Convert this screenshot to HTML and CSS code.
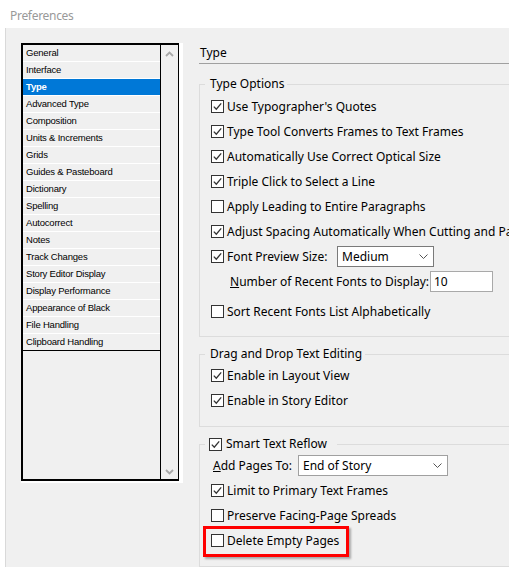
FILE: index.html
```html
<!DOCTYPE html>
<html>
<head>
<meta charset="utf-8">
<title>Preferences</title>
<link rel="stylesheet" href="styles.css">
</head>
<body>
<div class="titlebar">Preferences</div>
<div class="frame">
  <div class="sidebar">
    <div class="listbox">
      <ul class="list">
        <li>General</li>
        <li>Interface</li>
        <li class="sel">Type</li>
        <li>Advanced Type</li>
        <li>Composition</li>
        <li>Units &amp; Increments</li>
        <li>Grids</li>
        <li>Guides &amp; Pasteboard</li>
        <li>Dictionary</li>
        <li>Spelling</li>
        <li>Autocorrect</li>
        <li>Notes</li>
        <li>Track Changes</li>
        <li>Story Editor Display</li>
        <li>Display Performance</li>
        <li>Appearance of Black</li>
        <li>File Handling</li>
        <li>Clipboard Handling</li>
      </ul>
      <div class="scroll">
        <svg class="sarrow" width="9" height="6" viewBox="0 0 9 6"><path d="M1 5 L4.5 1.5 L8 5"/></svg>
        <svg class="sarrow" width="9" height="6" viewBox="0 0 9 6"><path d="M1 1 L4.5 4.5 L8 1"/></svg>
      </div>
    </div>
  </div>

  <div class="panel">
    <div class="panel-title">Type</div>

    <fieldset class="group first">
      <legend>Type Options</legend>
      <div class="row"><span class="cb"><svg viewBox="0 0 11 11"><path d="M1.8 5.6 L4.3 8.2 L9.2 2.4"/></svg></span>Use Typographer's Quotes</div>
      <div class="row"><span class="cb"><svg viewBox="0 0 11 11"><path d="M1.8 5.6 L4.3 8.2 L9.2 2.4"/></svg></span>Type Tool Converts Frames to Text Frames</div>
      <div class="row"><span class="cb"><svg viewBox="0 0 11 11"><path d="M1.8 5.6 L4.3 8.2 L9.2 2.4"/></svg></span>Automatically Use Correct Optical Size</div>
      <div class="row"><span class="cb"><svg viewBox="0 0 11 11"><path d="M1.8 5.6 L4.3 8.2 L9.2 2.4"/></svg></span>Triple Click to Select a Line</div>
      <div class="row"><span class="cb"></span>Apply Leading to Entire Paragraphs</div>
      <div class="row"><span class="cb"><svg viewBox="0 0 11 11"><path d="M1.8 5.6 L4.3 8.2 L9.2 2.4"/></svg></span>Adjust Spacing Automatically When Cutting and Pasting Words</div>
      <div class="row"><span class="cb"><svg viewBox="0 0 11 11"><path d="M1.8 5.6 L4.3 8.2 L9.2 2.4"/></svg></span><span class="lbl-font">Font Preview Size:</span>
        <span class="select sel-medium">Medium<svg class="chev" width="9" height="5" viewBox="0 0 9 5"><path d="M0.5 0.5 L4.5 4.5 L8.5 0.5"/></svg></span>
      </div>
      <div class="row indent"><span class="lbl-num"><u>N</u>umber of Recent Fonts to Display:</span><span class="textbox">10</span></div>
      <div class="row sp"><span class="cb"></span>Sort Recent Fonts List Alphabetically</div>
    </fieldset>

    <fieldset class="group">
      <legend>Drag and Drop Text Editing</legend>
      <div class="row"><span class="cb"><svg viewBox="0 0 11 11"><path d="M1.8 5.6 L4.3 8.2 L9.2 2.4"/></svg></span>Enable in Layout View</div>
      <div class="row"><span class="cb"><svg viewBox="0 0 11 11"><path d="M1.8 5.6 L4.3 8.2 L9.2 2.4"/></svg></span>Enable in Story Editor</div>
    </fieldset>

    <fieldset class="group">
      <legend class="cb-legend"><span class="cb"><svg viewBox="0 0 11 11"><path d="M1.8 5.6 L4.3 8.2 L9.2 2.4"/></svg></span>Smart Text Reflow</legend>
      <div class="row addpages"><span class="lbl-add"><u>A</u>dd Pages To:</span>
        <span class="select sel-story">End of Story<svg class="chev" width="9" height="5" viewBox="0 0 9 5"><path d="M0.5 0.5 L4.5 4.5 L8.5 0.5"/></svg></span>
      </div>
      <div class="row"><span class="cb"><svg viewBox="0 0 11 11"><path d="M1.8 5.6 L4.3 8.2 L9.2 2.4"/></svg></span>Limit to Primary Text Frames</div>
      <div class="row"><span class="cb"></span>Preserve Facing-Page Spreads</div>
      <div class="row marked"><span class="cb"></span>Delete Empty Pages<span class="highlight"></span></div>
    </fieldset>
  </div>
</div>
</body>
</html>
```

FILE: styles.css
```css
* { box-sizing: border-box; }

html, body {
  margin: 0;
  padding: 0;
}

body {
  width: 509px;
  height: 567px;
  overflow: hidden;
  background: #f0f0f0;
  font-family: "Noto Sans", "Liberation Sans", sans-serif;
  font-size: 12px;
  color: #000;
}

.titlebar {
  height: 28px;
  background: #fff;
  color: #999;
  padding: 6px 0 0 10px;
  line-height: 20px;
  letter-spacing: -0.3px;
}

.frame {
  display: flex;
  align-items: flex-start;
  height: 539px;
  border-left: 5px solid #fff;
  box-shadow: inset 1px 0 0 #d9d9d9;
  padding: 15px 0 0 16px;
}

/* ---------- category list ---------- */
.sidebar {
  flex: none;
  border-right: 4px solid #fff;
  border-bottom: 2px solid #fff;
}

.listbox {
  display: flex;
  width: 158px;
  height: 438px;
  border: 2px solid #000;
  border-right-width: 1px;
}

.list {
  list-style: none;
  margin: 0;
  padding: 0;
  width: 138px;
  border-right: 1px solid #000;
  font-family: "Liberation Sans", Arial, sans-serif;
  font-size: 9.5px;
  letter-spacing: -0.2px;
}

.list li {
  height: 17px;
  line-height: 16px;
  padding-left: 3px;
  border-bottom: 1px solid #fff;
  white-space: nowrap;
}

.list li:last-child { border-bottom-color: #000; }

.list li.sel {
  background: #0078d7;
  color: #fff;
  font-weight: bold;
}

.scroll {
  flex: 1;
  display: flex;
  flex-direction: column;
  justify-content: space-between;
  align-items: center;
  padding: 6px 0 4px;
}

.sarrow path {
  fill: none;
  stroke: #a8a8a8;
  stroke-width: 1.8;
}

/* ---------- right panel ---------- */
.panel {
  flex: none;
  width: 340px;
  margin-left: 16px;
}

.panel-title {
  padding: 2px 0 2px 1px;
  line-height: 16px;
  border-bottom: 1px solid #a0a0a0;
}

.group {
  margin: 12px 0 0;
  padding: 1px 0 13px 0;
  border: 1px solid #dcdcdc;
  min-width: 0;
}

.group.first { padding: 2px 0 12px 0; }

.group + .group { margin-top: 9px; }

.group legend {
  margin-left: 5px;
  padding: 0 3px 0 5px;
  line-height: 16px;
  white-space: nowrap;
}

.group legend.cb-legend {
  display: flex;
  align-items: center;
  padding: 0 10px 0 4px;
}

.cb-legend .cb { margin-right: 4px; }

.row {
  position: relative;
  display: flex;
  align-items: center;
  height: 25px;
  padding-left: 11px;
  white-space: nowrap;
}

.row.sp { margin-top: 5px; }
.row.indent { padding-left: 30px; }
.row.addpages { padding-left: 13px; }

.cb {
  flex: none;
  display: flex;
  width: 13px;
  height: 13px;
  border: 1px solid #333;
  background: #fff;
  margin-right: 3px;
}

.cb svg {
  width: 11px;
  height: 11px;
}

.cb path {
  fill: none;
  stroke: #333;
  stroke-width: 1.3;
}

.lbl-font { flex: none; width: 110px; }
.lbl-num { flex: none; width: 200px; }
.lbl-add { flex: none; width: 85px; }

.select {
  flex: none;
  display: flex;
  align-items: center;
  justify-content: space-between;
  height: 21px;
  background: #fff;
  padding: 0 5px 0 4px;
}

.sel-medium {
  width: 97px;
  border: 1px solid #7a7a7a;
}

.sel-story {
  width: 150px;
  border: 1px solid #a0a0a0;
}

.chev path {
  fill: none;
  stroke: #555;
  stroke-width: 1;
}

.textbox {
  flex: none;
  width: 63px;
  height: 21px;
  line-height: 19px;
  padding-left: 3px;
  background: #fff;
  border: 1px solid #a9a9a9;
}

.highlight {
  position: absolute;
  left: 3px;
  top: -2px;
  width: 146px;
  height: 31px;
  border: 3px solid #f00;
  box-shadow: 2px 2px 2px rgba(0, 0, 0, 0.3);
}
```
